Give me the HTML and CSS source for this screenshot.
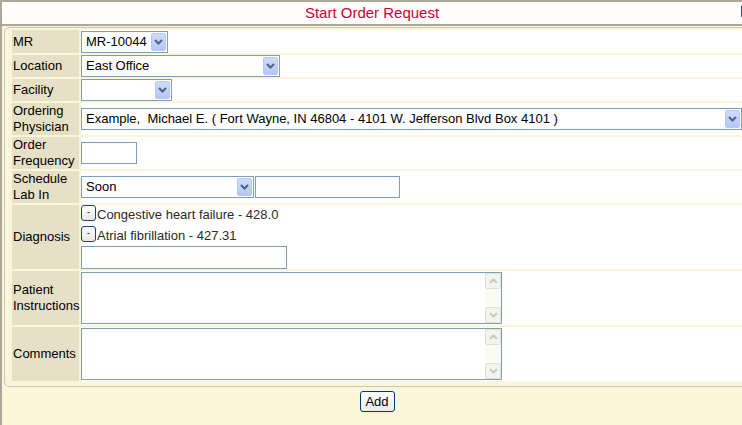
FILE: index.html
```html
<!DOCTYPE html>
<html>
<head>
<meta charset="utf-8">
<title>Start Order Request</title>
<link rel="stylesheet" href="styles.css">
</head>
<body>
<div class="header">
  <span class="title">Start Order Request</span>
  <span class="corner-btn"></span>
</div>
<div class="panel">
  <div class="form">
    <div class="lbl r23">MR</div>
    <div class="val r23">
      <div class="select w-mr"><span class="sel-text">MR-10044</span><span class="sel-btn"><svg width="9" height="6" viewBox="0 0 9 6"><path d="M1 1 L4.5 4.5 L8 1" fill="none" stroke="#4d6185" stroke-width="2"/></svg></span></div>
    </div>

    <div class="lbl">Location</div>
    <div class="val">
      <div class="select w-loc"><span class="sel-text">East Office</span><span class="sel-btn"><svg width="9" height="6" viewBox="0 0 9 6"><path d="M1 1 L4.5 4.5 L8 1" fill="none" stroke="#4d6185" stroke-width="2"/></svg></span></div>
    </div>

    <div class="lbl">Facility</div>
    <div class="val">
      <div class="select w-fac"><span class="sel-text"></span><span class="sel-btn"><svg width="9" height="6" viewBox="0 0 9 6"><path d="M1 1 L4.5 4.5 L8 1" fill="none" stroke="#4d6185" stroke-width="2"/></svg></span></div>
    </div>

    <div class="lbl">Ordering Physician</div>
    <div class="val">
      <div class="select w-phys"><span class="sel-text">Example,&nbsp; Michael E. ( Fort Wayne, IN 46804 - 4101 W. Jefferson Blvd Box 4101 )</span><span class="sel-btn"><svg width="9" height="6" viewBox="0 0 9 6"><path d="M1 1 L4.5 4.5 L8 1" fill="none" stroke="#4d6185" stroke-width="2"/></svg></span></div>
    </div>

    <div class="lbl">Order Frequency</div>
    <div class="val">
      <div class="input w-freq"></div>
    </div>

    <div class="lbl">Schedule Lab In</div>
    <div class="val gap1">
      <div class="select w-sched"><span class="sel-text">Soon</span><span class="sel-btn"><svg width="9" height="6" viewBox="0 0 9 6"><path d="M1 1 L4.5 4.5 L8 1" fill="none" stroke="#4d6185" stroke-width="2"/></svg></span></div>
      <div class="input w-sched2"></div>
    </div>

    <div class="lbl">Diagnosis</div>
    <div class="val diag">
      <div class="diag-line"><span class="mini-btn">-</span><span class="diag-text">Congestive heart failure - 428.0</span></div>
      <div class="diag-line second"><span class="mini-btn">-</span><span class="diag-text">Atrial fibrillation - 427.31</span></div>
      <div class="input w-diag"></div>
    </div>

    <div class="lbl">Patient Instructions</div>
    <div class="val">
      <div class="textarea"><div class="ta-body"></div><div class="scroll"><span class="sb-btn"><svg width="9" height="6" viewBox="0 0 9 6"><path d="M1 5 L4.5 1.5 L8 5" fill="none" stroke="#cbcac0" stroke-width="2"/></svg></span><span class="sb-btn"><svg width="9" height="6" viewBox="0 0 9 6"><path d="M1 1 L4.5 4.5 L8 1" fill="none" stroke="#cbcac0" stroke-width="2"/></svg></span></div></div>
    </div>

    <div class="lbl">Comments</div>
    <div class="val">
      <div class="textarea"><div class="ta-body"></div><div class="scroll"><span class="sb-btn"><svg width="9" height="6" viewBox="0 0 9 6"><path d="M1 5 L4.5 1.5 L8 5" fill="none" stroke="#cbcac0" stroke-width="2"/></svg></span><span class="sb-btn"><svg width="9" height="6" viewBox="0 0 9 6"><path d="M1 1 L4.5 4.5 L8 1" fill="none" stroke="#cbcac0" stroke-width="2"/></svg></span></div></div>
    </div>
  </div>
</div>
<div class="footer">
  <button class="add-btn" type="button">Add</button>
</div>
</body>
</html>
```
FILE: styles.css
```css
html {
  overflow: hidden;
}
body {
  margin: 0;
  min-height: 425px;
  border-left: 2px solid #aca899;
  background: #fbf5da;
  font-family: "Liberation Sans", Arial, sans-serif;
  font-size: 13px;
  color: #000;
}
.header {
  position: relative;
  height: 22px;
  border-top: 2px solid #aca899;
  border-bottom: 2px solid #aca899;
  background: #fefdf9;
  text-align: center;
  line-height: 22px;
}
.title {
  color: #cc0044;
  font-size: 15px;
}
.corner-btn {
  position: absolute;
  top: 3px;
  left: 739px;
  width: 12px;
  height: 11px;
  border: 1px solid #2b4a7c;
  border-radius: 2px;
  background: #f2f2ee;
}
.panel {
  margin: 1px -30px 0 2px;
  padding: 2px 0 5px 7px;
  border: 1px solid #c9c6b6;
  border-radius: 5px;
  background: #fbf5da;
}
.form {
  display: grid;
  grid-template-columns: 67px 1fr;
  grid-template-rows: 23px 22px 22px 32px 32px 32px 64px 54px 54px;
  gap: 2px;
}
.lbl {
  background: #e6e1c6;
  padding-left: 1px;
  display: flex;
  align-items: center;
  line-height: 16px;
}
.val {
  background: #fff;
  display: flex;
  align-items: center;
}
.val.r23 {
  align-items: flex-end;
}
.val.gap1 {
  gap: 1px;
}
.select {
  box-sizing: border-box;
  height: 22px;
  border: 1px solid #7f9db9;
  background: #fff;
  display: flex;
  align-items: stretch;
  padding: 1px;
}
.sel-text {
  flex: 1;
  padding-left: 3px;
  line-height: 18px;
  white-space: nowrap;
  overflow: hidden;
}
.sel-btn {
  width: 15px;
  box-sizing: border-box;
  border: 1px solid #b6c8f2;
  border-radius: 2px;
  background: linear-gradient(#cfdcfd, #b3c7f6);
  display: flex;
  align-items: center;
  justify-content: center;
}
.w-mr { width: 87px; }
.w-loc { width: 199px; }
.w-fac { width: 91px; }
.w-phys { width: 661px; }
.w-sched { width: 173px; }
.input {
  box-sizing: border-box;
  height: 22px;
  border: 1px solid #7f9db9;
  background: #fff;
}
.w-freq { width: 56px; }
.w-sched2 { width: 145px; }
.w-diag { width: 206px; height: 23px; }
.val.diag {
  flex-direction: column;
  align-items: flex-start;
  justify-content: flex-start;
}
.diag-line {
  height: 20px;
  display: flex;
  align-items: flex-start;
}
.diag-line.second {
  height: 20px;
  padding-top: 1px;
}
.mini-btn {
  box-sizing: border-box;
  width: 15px;
  height: 16px;
  border: 1px solid #1f4276;
  border-radius: 3px;
  background: linear-gradient(#ffffff, #e9e7dc);
  font-size: 9px;
  line-height: 12px;
  text-align: center;
  color: #000;
}
.diag-text {
  margin-top: 2px;
  padding-left: 1px;
  color: #2a2a2a;
  line-height: 16px;
}
.textarea {
  box-sizing: border-box;
  width: 421px;
  height: 52px;
  border: 1px solid #7f9db9;
  background: #fff;
  display: flex;
}
.ta-body {
  flex: 1;
}
.scroll {
  width: 16px;
  background: #fbfbf6;
  display: flex;
  flex-direction: column;
  justify-content: space-between;
}
.sb-btn {
  box-sizing: border-box;
  height: 16px;
  border: 1px solid #e2e0d5;
  border-radius: 2px;
  background: #f4f3ec;
  display: flex;
  align-items: center;
  justify-content: center;
}
.footer {
  margin-right: -10px;
  padding-top: 4px;
  text-align: center;
}
.add-btn {
  box-sizing: border-box;
  width: 35px;
  height: 21px;
  padding: 0;
  border: 1px solid #003c74;
  border-radius: 3px;
  background: linear-gradient(#ffffff, #ecebe3);
  font-family: "Liberation Sans", Arial, sans-serif;
  font-size: 13px;
  color: #000;
}
```
